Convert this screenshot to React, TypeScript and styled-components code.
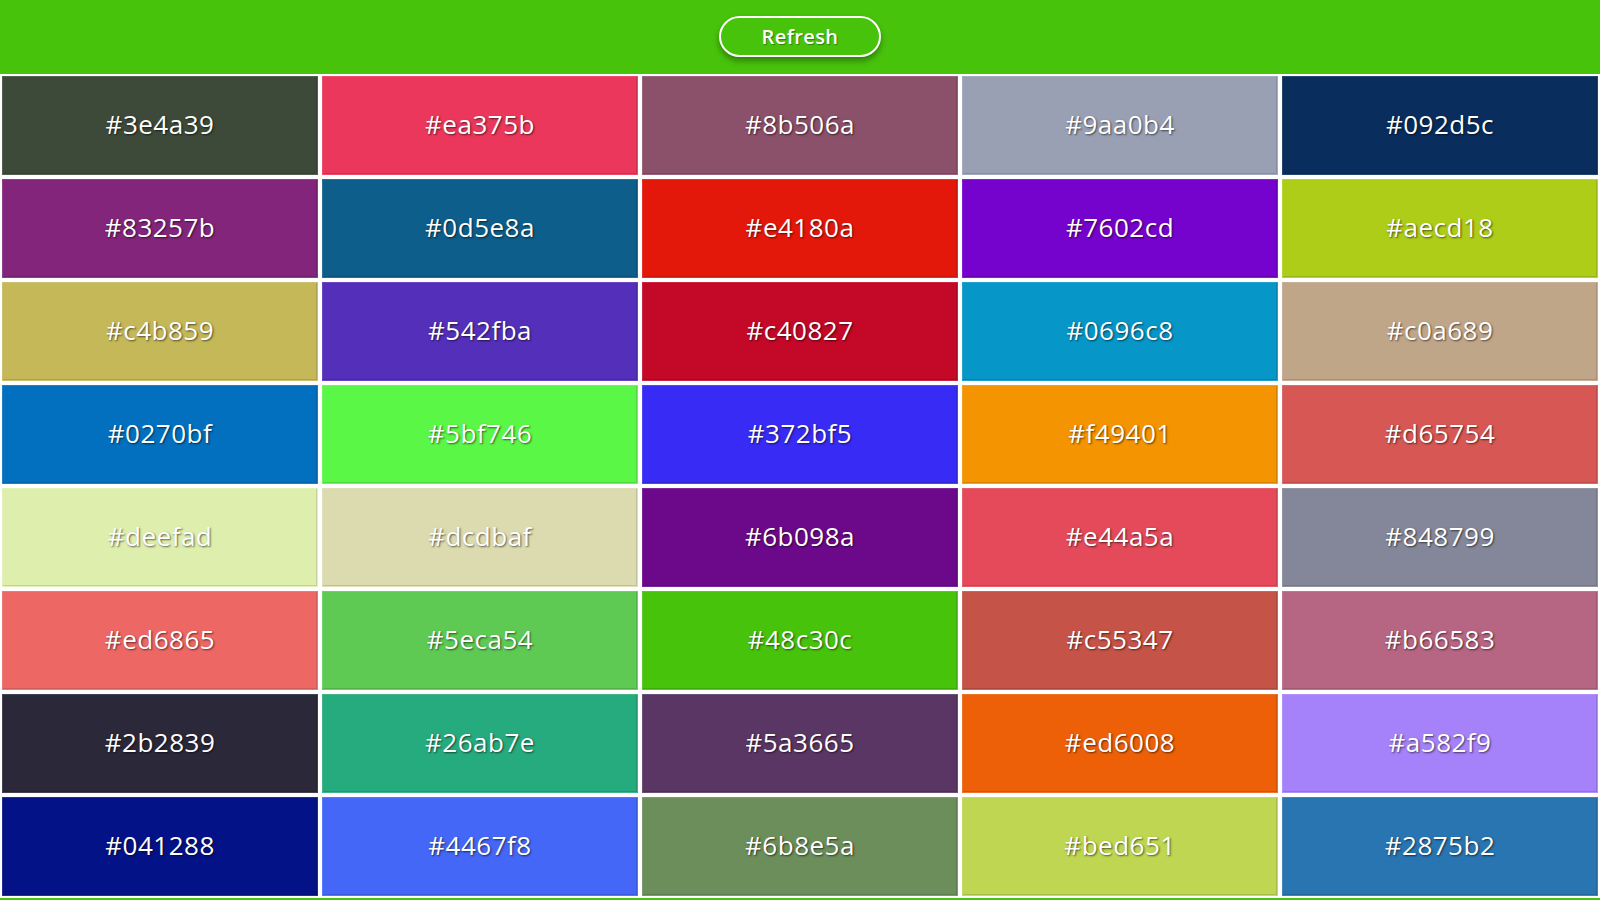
import React, { useState } from "react";
import styled, { createGlobalStyle } from "styled-components";

const GlobalStyle = createGlobalStyle`
  * { box-sizing: border-box; }
  html, body { margin: 0; padding: 0; }
  body {
    background: #48c30c;
    font-family: "Open Sans", "Noto Sans", sans-serif;
  }
`;

const Header = styled.header`
  height: 74px;
  background: #48c30c;
  display: flex;
  align-items: center;
  justify-content: center;
  padding-bottom: 1px;
`;

const RefreshButton = styled.button`
  width: 162px;
  height: 41px;
  border: 2px solid #ffffff;
  border-radius: 21px;
  background: #48c30c;
  color: #ffffff;
  font-family: "Open Sans", "Noto Sans", sans-serif;
  font-size: 20px;
  font-weight: 600;
  letter-spacing: 0.4px;
  padding-bottom: 2px;
  text-shadow: 1px 1px 1px rgba(0, 0, 0, 0.35);
  box-shadow: 0 4px 6px rgba(0, 0, 0, 0.35);
  cursor: pointer;
`;

const Grid = styled.main`
  background: #ffffff;
  padding: 2px;
  display: grid;
  grid-template-columns: repeat(5, 1fr);
  grid-auto-rows: 99px;
  gap: 4px;
`;

const Swatch = styled.div<{ $color: string }>`
  background: ${(p) => p.$color};
  border: 1px solid rgba(255, 255, 255, 0.12);
  box-shadow: inset -1px -1px 0 rgba(0, 0, 0, 0.12);
  display: flex;
  align-items: center;
  justify-content: center;
  padding-bottom: 4px;
  color: #ffffff;
  font-size: 26px;
  font-weight: 500;
  letter-spacing: 0.5px;
  text-shadow: 1px 1px 2px rgba(0, 0, 0, 0.6);
`;

const COLORS = [
  "#3e4a39", "#ea375b", "#8b506a", "#9aa0b4", "#092d5c",
  "#83257b", "#0d5e8a", "#e4180a", "#7602cd", "#aecd18",
  "#c4b859", "#542fba", "#c40827", "#0696c8", "#c0a689",
  "#0270bf", "#5bf746", "#372bf5", "#f49401", "#d65754",
  "#deefad", "#dcdbaf", "#6b098a", "#e44a5a", "#848799",
  "#ed6865", "#5eca54", "#48c30c", "#c55347", "#b66583",
  "#2b2839", "#26ab7e", "#5a3665", "#ed6008", "#a582f9",
  "#041288", "#4467f8", "#6b8e5a", "#bed651", "#2875b2",
];

const randomHex = () =>
  "#" + Math.floor(Math.random() * 0xffffff).toString(16).padStart(6, "0");

export default function App() {
  const [colors, setColors] = useState<string[]>(COLORS);
  return (
    <>
      <GlobalStyle />
      <Header>
        <RefreshButton onClick={() => setColors(colors.map(randomHex))}>
          Refresh
        </RefreshButton>
      </Header>
      <Grid>
        {colors.map((c, i) => (
          <Swatch key={i} $color={c}>
            {c}
          </Swatch>
        ))}
      </Grid>
    </>
  );
}
